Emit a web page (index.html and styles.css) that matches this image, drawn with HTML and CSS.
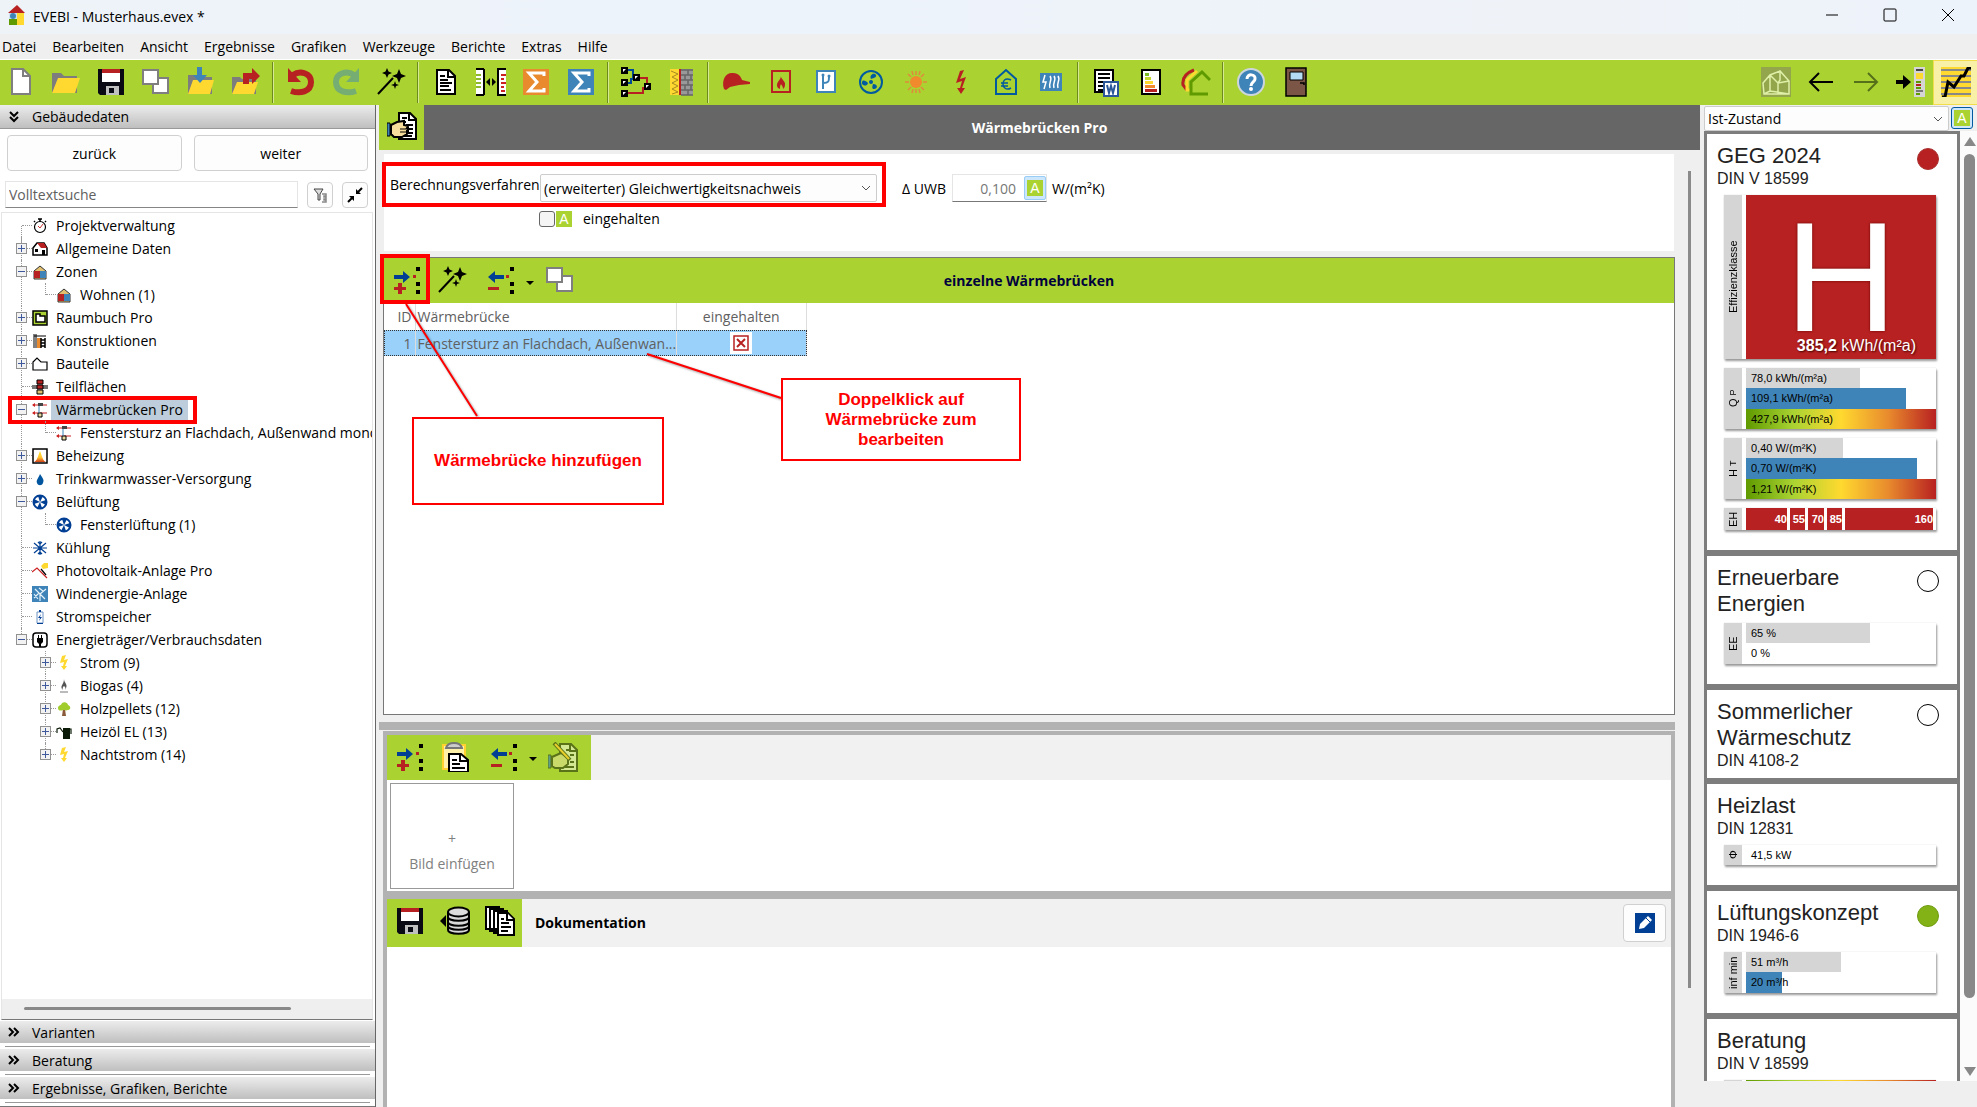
FILE: index.html
```html
<!DOCTYPE html>
<html lang="de">
<head>
  <meta charset="UTF-8" />
  <meta name="viewport" content="width=device-width, initial-scale=1.0" />
  <title>EVEBI - Musterhaus.evex *</title>
  <link rel="stylesheet" href="styles.css">
</head>
<body>
  <svg class="sprite" aria-hidden="true">
    <defs>
      <linearGradient id="fire" x1="0" y1="0" x2="0" y2="1"><stop offset="0" stop-color="#ffe92f"/><stop offset=".6" stop-color="#ffc02f"/><stop offset="1" stop-color="#d0401c"/></linearGradient>
    </defs>
    <!-- toolbar icons, 30 x 30 -->
    <symbol id="new" viewBox="0 0 30 30"><path d="M6 2h11l7 7v18H6z" fill="#fff" stroke="#7f7f7f" stroke-width="2"/><path d="M17 2v7h7" fill="none" stroke="#7f7f7f" stroke-width="2"/></symbol>
    <symbol id="folder" viewBox="0 0 30 30"><path d="M1 6h9l3 3h13v17H1z" fill="#7d7d7d"/><path d="M7 11h22l-5 15H1z" fill="#ffd92f"/></symbol>
    <symbol id="save" viewBox="0 0 30 30"><path d="M2 2h26v26H4l-2-2z" fill="#0a0a14"/><path d="M6 6h18v9H6z" fill="#fff"/><path d="M6 2h18v4H6z" fill="#b82121"/><path d="M10 19h13v9H10z" fill="#bfbfbf"/><path d="M13 21h5v5h-5z" fill="#0a0a14"/></symbol>
    <symbol id="copy" viewBox="0 0 30 30"><g fill="#fff" stroke="#7f7f7f" stroke-width="2"><path d="M12 11h15v15H12z"/><path d="M2 3h15v14H2z"/></g></symbol>
    <symbol id="import" viewBox="0 0 30 30"><path d="M2 8h8l2 2h14v17H2z" fill="#7d7d7d"/><path d="M7 13h21l-4 14H2z" fill="#ffd92f"/><path d="M11 0h5v8h5l-7 8-7-8h4z" fill="#3f84b8"/></symbol>
    <symbol id="export" viewBox="0 0 30 30"><path d="M1 10h8l2 2h14v15H1z" fill="#7d7d7d"/><path d="M6 15h21l-4 12H1z" fill="#ffd92f"/><path d="M12 17V6h9V1l8 8-8 8v-5h-3v5z" fill="#b82121"/></symbol>
    <symbol id="undo" viewBox="0 0 30 30"><path d="M7 8c7-5 18-2 18 7 0 10-11 12-20 9" fill="none" stroke="#b82121" stroke-width="6"/><path d="M2 1v14h13z" fill="#b82121"/></symbol>
    <symbol id="redo" viewBox="0 0 30 30"><path d="M23 8c-7-5-18-2-18 7 0 10 11 12 20 9" fill="none" stroke="#76ad72" stroke-width="6"/><path d="M28 1v14H15z" fill="#76ad72"/></symbol>
    <symbol id="wand" viewBox="0 0 30 30"><path d="M2 27 17 11" stroke="#000" stroke-width="2"/><path d="m11 1 1.500 3.500L16 6l-3.500 1.500L11 11 9.500 7.500 6 6l3.500-1.500zM23 2l2 5 5 2-5 2-2 5-2-5-5-2 5-2zM19 14l1 3 3 1-3 1-1 3-1-3-3-1 3-1z"/></symbol>
    <symbol id="doc" viewBox="0 0 30 30"><path d="M6 3h12l6 6v18H6z" fill="#fff" stroke="#000" stroke-width="2"/><path d="M17 3v7h7M9 9h5M9 13h8M9 16h12M9 19h9M9 23h11" stroke="#000" stroke-width="2" fill="none"/></symbol>
    <symbol id="compare" viewBox="0 0 30 30"><path d="M0 3h8v24H0zM22 3h8v24h-8z" fill="#fff"/><path d="M0 2h8M8 2v26M0 28h8M30 2h-8v26h8" stroke="#000" stroke-width="2" fill="none"/><path d="M0 8h5M0 12h5M0 16h5M0 20h5" stroke="#8cb82b" stroke-width="2"/><path d="M25 8h5M25 12h3M25 16h5M25 20h3M25 24h4" stroke="#c22" stroke-width="2"/><path d="m10 15 4-4v8zM20 15l-4-4v8z"/></symbol>
    <symbol id="sum-o" viewBox="0 0 30 30"><path d="M2 2h26v26H2z" fill="#e88a2d"/><path d="M23 9V6H8l8 9-8 9h15v-3" fill="none" stroke="#fff" stroke-width="3"/></symbol>
    <symbol id="sum-b" viewBox="0 0 30 30"><path d="M2 2h26v26H2z" fill="#3f84b8"/><path d="M23 9V6H8l8 9-8 9h15v-3" fill="none" stroke="#fff" stroke-width="3"/></symbol>
    <symbol id="net" viewBox="0 0 30 30"><path d="M4 3h8v8h4M4 16h6v-4h6" fill="none" stroke="#004a93" stroke-width="2"/><path d="M16 11h10v10M4 26h18v-6" fill="none" stroke="#b82121" stroke-width="2"/><path d="M0 0h7v7H0zM0 12h7v7H0zM0 23h7v7H0zM12 7h7v7h-7zM23 16h7v7h-7z"/><path d="M2 2h3L2 5zM2 14h3l-3 3zM2 25h3l-3 3zM14 9h3l-3 3zM25 18h3l-3 3z" fill="#fff"/></symbol>
    <symbol id="wall" viewBox="0 0 30 30"><path d="M4 2h9v26H4z" fill="#ffd92f"/><path d="M5 4l7 3-6 3 6 3-6 3 6 3-6 3 6 3-6 2" fill="none" stroke="#a78a20"/><path d="M13 2h2v26h-2z" fill="#b82121"/><path d="M15 2h12v26H15z" fill="#999"/><path d="M15 3h12M15 8h12M15 13h12M15 18h12M15 23h12M15 28h12M22 3v5M19 8v5M25 8v5M22 13v5M19 18v5M25 18v5M22 23v5" stroke="#666" stroke-width="1.500"/></symbol>
    <symbol id="cap" viewBox="0 0 30 30"><path d="M3 22c-3-9 2-17 9-16 6 0 8 4 9 7l8 2v2l-11 1-9 2-4 3z" fill="#b82121"/></symbol>
    <symbol id="heat" viewBox="0 0 30 30"><path d="M6 4h18v21H6z" fill="none" stroke="#b82121" stroke-width="2"/><path d="M15 8c-1 4 5 6 4 10 0 2-1 3-2 4 0-3-1-3-2-5-1 2-1 3-1 5-3-1-4-4-2-7 1-2 3-3 3-7z" fill="#b82121"/></symbol>
    <symbol id="pipe" viewBox="0 0 30 30"><path d="M6 4h18v21H6z" fill="#fff" stroke="#3f84b8" stroke-width="2"/><path d="M12 9v13M12 16c6 0 6-2 6-6" fill="none" stroke="#3f84b8" stroke-width="2"/><circle cx="12" cy="8" r="1.500" fill="#3f84b8"/><circle cx="18" cy="9" r="1.500" fill="#3f84b8"/></symbol>
    <symbol id="fan" viewBox="0 0 30 30"><circle cx="15" cy="15" r="11" fill="none" stroke="#005aa0" stroke-width="2"/><g fill="#005aa0"><circle cx="15" cy="15" r="2"/><path d="M15 12c-2-4 3-7 5-4 1 2-2 3-5 4zM12 16c-1 4-7 3-6-1 1-3 4-1 6 1zM17 17c5 0 5 5 1 5-2 0-2-2-1-5z"/></g></symbol>
    <symbol id="sun" viewBox="0 0 30 30"><circle cx="15" cy="15" r="6" fill="#f08a2c"/><path d="M15 4v4M15 22v4M4 15h4M22 15h4M7 7l3 3M20 20l3 3M23 7l-3 3M7 23l3-3M11 4l1 4M19 4l-1 4M11 26l1-4M19 26l-1-4" stroke="#e08a3c" stroke-width="1.500"/></symbol>
    <symbol id="bolt" viewBox="0 0 30 30"><path d="m14 4 4-1-4 9 6-2-4 11h3l-4 6-4-6h3l2-7-6 2z" fill="#b82121"/></symbol>
    <symbol id="euro" viewBox="0 0 30 30"><path d="M5 12 15 3l10 9v15H5z" fill="none" stroke="#005aa0" stroke-width="2"/><path d="M20 13c-6-3-8 1-8 4s3 7 8 4M10 16h7M10 19h7" fill="none" stroke="#005aa0" stroke-width="1.500"/></symbol>
    <symbol id="radiator" viewBox="0 0 30 30"><path d="M4 6h22v18H4z" fill="#3f84b8"/><path d="m9 8-2 7h3l-2 7M14 9c3 4-2 7 0 12M18 9c3 4-2 7 0 12M22 9c3 4-2 7 0 12" fill="none" stroke="#fff" stroke-width="1.500"/></symbol>
    <symbol id="word" viewBox="0 0 30 30"><path d="M4 3h18v22H4z" fill="#fff" stroke="#000" stroke-width="2"/><path d="M7 7h12M7 11h12M7 15h8M7 19h5M7 23h5" stroke="#000" stroke-width="2"/><path d="M13 15h14v14H13z" fill="#fff" stroke="#2b579a" stroke-width="2"/><path d="m16 18 2 8 2-7 2 7 2-8" fill="none" stroke="#2b579a" stroke-width="2"/></symbol>
    <symbol id="label" viewBox="0 0 30 30"><path d="M6 3h18v24H6z" fill="#fff" stroke="#000" stroke-width="2"/><path d="M9 6h4v3H9z" fill="#7db928"/><path d="M9 10h6v3H9z" fill="#c5d82d"/><path d="M9 14h8v3H9z" fill="#ffd92f"/><path d="M9 18h10v3H9z" fill="#f08a2c"/><path d="M9 22h12v3H9z" fill="#b82121"/></symbol>
    <symbol id="houses" viewBox="0 0 30 30"><g fill="none" stroke-width="3"><path d="M13 3C5 6 1 11 2 18l4 5" stroke="#b82121"/><path d="M16 4 6 13v10h5" stroke="#ffd92f"/><path d="m29 13-8-8-11 10v12h17" stroke="#5f9a00"/></g></symbol>
    <symbol id="help" viewBox="0 0 30 30"><circle cx="15" cy="15" r="13" fill="#3f84b8" stroke="#ccd6dc" stroke-width="2"/><path d="M11 12c0-6 9-5 8 0 0 3-4 3-4 7" fill="none" stroke="#fff" stroke-width="3"/><circle cx="15" cy="22" r="2" fill="#fff"/></symbol>
    <symbol id="door" viewBox="0 0 30 30"><path d="M5 1h20v28H5z" fill="#7b5545" stroke="#000" stroke-width="1.500"/><path d="M9 5h13v8H9z" fill="#b5dcf5" stroke="#000"/><path d="M19 16h4v2" fill="none" stroke="#000" stroke-width="1.500"/></symbol>
    <symbol id="view3d" viewBox="0 0 30 30"><path d="M0 0h30v30H0z" fill="#93a64c"/><path d="M2 16 9 8l10-4 9 10v13H3zM9 8l8 8v11M17 16l11-2M19 4v9l-2 3M9 8v16l-6 3M9 24l19 3" fill="none" stroke="#dff0a8" stroke-width="1.500"/></symbol>
    <symbol id="left" viewBox="0 0 30 30"><path d="M27 15H5M13 6l-9 9 9 9" fill="none" stroke="#000" stroke-width="2"/></symbol>
    <symbol id="right" viewBox="0 0 30 30"><path d="M3 15h22M17 6l9 9-9 9" fill="none" stroke="#56701a" stroke-width="2"/></symbol>
    <symbol id="panel" viewBox="0 0 30 30"><path d="M0 13h7V8l8 7-8 7v-5H0z"/><path d="M18 0h11v30H18z" fill="#d5d5d5"/><path d="M20 2h7v2h-7z" fill="#444"/><path d="M20 6h7v6h-7z" fill="#ffd92f"/><path d="M20 14h5v2h-5zM20 20h5v2h-5zM20 26h4v2h-4z" fill="#5f9a00"/><path d="M20 17h5v2h-5z" fill="#b82121"/><path d="M20 23h7v2h-7z" fill="#777"/></symbol>
    <symbol id="chart" viewBox="0 0 30 30"><path d="M0 0h30v30H0z" fill="#ffd92f"/><path d="M0 3h30M0 9h30M0 15h30M0 21h30M0 27h30" stroke="#888" stroke-width="2"/><path d="M1 30h3l3-15 6 5 7-11h3l4-8h3" fill="none" stroke="#000" stroke-width="3"/></symbol>
    <symbol id="handdoc" viewBox="0 0 30 30"><path d="M12 1h11l6 6v20H12z" fill="#fff" stroke="#000" stroke-width="2"/><path d="M22 1v7h7M15 6h5M15 10h4M19 13h7M20 17h6M20 21h6M16 24h9" stroke="#000" stroke-width="2" fill="none"/><path d="M4 13l6-3 7-1v4l4 1-1 2h1v3h-1v3l-5 3H7l-3-3z" fill="#f7dd9b" stroke="#000" stroke-width="2"/><path d="M13 17h7M13 20h7" stroke="#000"/><path d="M0 11h3v13H0z" fill="#3f84b8" stroke="#000"/></symbol>
    <symbol id="add" viewBox="0 0 30 30"><path d="M2 10h9V6l7 6-7 6v-4H2z" fill="#003f94"/><path d="M2 22h4v-4h4v4h4v3h-4v4H6v-4H2z" fill="#b82121"/><path d="M21 10h3v3h-3z" fill="#b82121"/><path d="M24 2h4v4h-4zM24 17h4v4h-4zM24 25h4v4h-4z"/></symbol>
    <symbol id="remove" viewBox="0 0 30 30"><path d="M18 10H9V6l-7 6 7 6v-4h9z" fill="#003f94"/><path d="M2 22h11v3H2z" fill="#b82121"/><path d="M20 10h3v3h-3z" fill="#b82121"/><path d="M24 2h4v4h-4zM24 17h4v4h-4zM24 25h4v4h-4z"/></symbol>
    <symbol id="paste" viewBox="0 0 30 30"><path d="M3 3h22v24H3z" fill="#fff2a8" stroke="#ffd22f" stroke-width="2"/><path d="M6 6c1-4 4-5 8-5s7 1 8 5z" fill="#ccc" stroke="#777" stroke-width="2"/><path d="M9 12h12l7 6v12H9z" fill="#fff" stroke="#000" stroke-width="2"/><path d="M20 12v7h7M12 18h5M12 22h8M12 26h13" stroke="#000" stroke-width="2" fill="none"/></symbol>
    <symbol id="handedit" viewBox="0 0 30 30"><path d="M12 2h11l6 6v21H12z" fill="#d4e894" stroke="#5b7318" stroke-width="2"/><path d="M22 2v7h7" fill="none" stroke="#5b7318" stroke-width="2"/><path d="M18 8h3M22 13h4M22 20h4M17 25h9" stroke="#5b7318" stroke-width="2"/><path d="m4 15 9-4 7 5v6l-5 4H7l-3-2z" fill="#c9d96a" stroke="#5b7318" stroke-width="2"/><path d="M0 13h3v13H0z" fill="#5fa08a" stroke="#5b7318"/><path d="m6 1 16 17" stroke="#5b7318" stroke-width="4"/><path d="m7 2 14 15" stroke="#e9cf2b" stroke-width="2"/></symbol>
    <symbol id="db" viewBox="0 0 30 30"><path d="M0 15l6-6v12z"/><path d="M8 6v18c0 5 21 5 21 0V6" fill="#d8d8d8" stroke="#000" stroke-width="2"/><ellipse cx="18.500" cy="6" rx="10.500" ry="4.500" fill="#ddd" stroke="#000" stroke-width="2"/><path d="M8 11c0 5 21 5 21 0M8 16c0 5 21 5 21 0M8 20c0 5 21 5 21 0" fill="none" stroke="#000" stroke-width="2"/></symbol>
    <symbol id="pages" viewBox="0 0 30 30"><g fill="#fff" stroke="#000" stroke-width="2"><path d="M1 1h13v22H1zM5 3h13v22H5zM9 5h13v22H9z"/><path d="M13 7h10l6 6v16H13z"/><path d="M22 7v7h7M16 13h3M16 17h8M16 21h10M16 25h7"/></g></symbol>
    <symbol id="edit" viewBox="0 0 22 22"><path d="M1 1h20v20H1z" fill="#003f94"/><path d="m5 17 1-5 8-8 4 4-8 8z" fill="#fff"/><path d="m12 6 4 4" stroke="#003f94"/></symbol>
    <!-- tree icons, 16 x 16 -->
    <symbol id="t-clock" viewBox="0 0 16 16"><circle cx="8" cy="9" r="5.500" fill="#fff" stroke="#000" stroke-width="1.200"/><path d="M8 1v3M6 1h4M13 3l1 1M3 3 2 4" stroke="#000" stroke-width="1.500"/><path d="m6 8 2 2 3-4" fill="none" stroke="#c33"/></symbol>
    <symbol id="t-house" viewBox="0 0 16 16"><path d="M1 7 5 2h7l3 5v7H1z" fill="#fff" stroke="#000" stroke-width="1.500"/><path d="M5 2h7l3 5H9z" fill="#b82121"/><path d="M3 8h3v3H3zM10 9h3v5h-3z"/></symbol>
    <symbol id="t-zone" viewBox="0 0 16 16"><path d="M2 7 8 2l6 5v8H2z" fill="#e0bf70" stroke="#333"/><path d="M2 7h6v7H2z" fill="#b82121"/><path d="M8 7h6v7H8z" fill="#3f84b8"/></symbol>
    <symbol id="t-room" viewBox="0 0 16 16"><path d="M1 1h14v14H1z" fill="#a9d232" stroke="#000" stroke-width="1.500"/><path d="M4 4h4v2h5v6H4z" fill="#fff" stroke="#000" stroke-width="1.500"/></symbol>
    <symbol id="t-constr" viewBox="0 0 16 16"><path d="M2 3h12M2 1v14M4 1v14" stroke="#000"/><path d="M5 5h4v10H5z" fill="#e88a2d"/><path d="M9 5v10M13 5v10M9 7h4M9 10h4M9 13h4" stroke="#000" stroke-width="1.500"/></symbol>
    <symbol id="t-part" viewBox="0 0 16 16"><path d="M1 14V6l4-4 4 4h6v8z" fill="#fff" stroke="#000" stroke-width="1.200"/></symbol>
    <symbol id="t-area" viewBox="0 0 16 16"><path d="M5 1h6v4H5z" fill="#b82121" stroke="#000"/><path d="M0 6h16v4H0z" fill="#777"/><path d="M5 6h6v4H5z" fill="#b82121" stroke="#000"/><path d="M5 11h6v4H5z" fill="#e0bf70" stroke="#000"/></symbol>
    <symbol id="t-bridge" viewBox="0 0 16 16"><path d="M1 3h14M1 11h14" stroke="#c22" stroke-width="1.200"/><path d="m0 3 3-2v4zM0 11l3-2v4z" fill="#c22"/><path d="M6 1h5v3H6z" fill="#444"/><path d="M6 11h4v4H6z" fill="#e8d9a0" stroke="#000"/><path d="M7 4v7" stroke="#3f84b8"/></symbol>
    <symbol id="t-fire" viewBox="0 0 16 16"><path d="M1 1h14v14H1z" fill="#fff" stroke="#000" stroke-width="1.500"/><path d="M2 14c3-1 4-6 6-11 2 5 3 10 6 11z" fill="url(#fire)"/></symbol>
    <symbol id="t-drop" viewBox="0 0 16 16"><path d="M8 3c4 6 4 6 3 9-1 3-5 3-6 0-1-3 1-4 3-9z" fill="#00559f"/></symbol>
    <symbol id="t-fan" viewBox="0 0 16 16"><circle cx="8" cy="8" r="6.500" fill="#fff" stroke="#003f94" stroke-width="2"/><path d="M8 8 6 2h5zM8 8l6-2v5zM8 8l2 6H5zM8 8l-6 2V5z" fill="#003f94"/></symbol>
    <symbol id="t-snow" viewBox="0 0 16 16"><path d="M8 1v14M1 8h14M2 3l12 10M14 3 2 13M6 2l2 2 2-2M6 14l2-2 2 2" fill="none" stroke="#003f94" stroke-width="1.200"/></symbol>
    <symbol id="t-pv" viewBox="0 0 16 16"><path d="m0 9 5-4 10 10" fill="none" stroke="#c22" stroke-width="1.200"/><path d="m9 6 5 6" stroke="#000" stroke-width="1.200"/><path d="M12 0h4v5l-5 1-2-3z" fill="#ffd92f"/></symbol>
    <symbol id="t-wind" viewBox="0 0 16 16"><path d="M0 0h16v16H0z" fill="#3f84b8"/><path d="M8 15V8L3 3M8 8l6-5M8 8l5 5M2 8l4 5M7 2l4 3M2 12l5-5" fill="none" stroke="#e6f2fa" stroke-width="1.200"/></symbol>
    <symbol id="t-battery" viewBox="0 0 16 16"><path d="M5 3h6v11H5z" fill="#fff" stroke="#6b94c4"/><path d="M7 1h2v2H7zM5 14h6v1H5zM9 5 6 9h2l-1 3 3-4H8z" fill="#003f94"/></symbol>
    <symbol id="t-plug" viewBox="0 0 16 16"><rect x="1" y="1" width="14" height="14" rx="3" fill="#fff" stroke="#000" stroke-width="1.500"/><path d="M5 6h6v4l-2 2v3H7v-3l-2-2zM6 3h1v3H6zM9 3h1v3H9z"/></symbol>
    <symbol id="t-bolt" viewBox="0 0 16 16"><path d="m6 1 4-1-2 5 4-1-3 7h2l-3 4-3-4h2l1-4-4 1z" fill="#ffd92f"/></symbol>
    <symbol id="t-gas" viewBox="0 0 16 16"><path d="M8 1c0 4 4 5 2 9l-1 2c1-3 0-3-1-4-1 1-2 2-1 4-4-4 1-5 1-11z" fill="#555"/><path d="M4 14h8" stroke="#777"/></symbol>
    <symbol id="t-tree" viewBox="0 0 16 16"><path d="M7 8h2l1 7H6z" fill="#8a5a3a"/><path d="M2 7c0-3 3-2 4-5 3-2 6 0 6 2 3 1 3 5 0 5-2 1-4 0-5 0-2 1-5 1-5-2z" fill="#a0cc2c"/></symbol>
    <symbol id="t-oil" viewBox="0 0 16 16"><path d="M7 4h7v11H7z" fill="#0a1a06"/><path d="M7 8 4 4 1 5v4M13 5h2v5" fill="none" stroke="#0a1a06" stroke-width="1.200"/></symbol>
  </svg>

  <header class="titlebar">
    <svg class="logo" viewBox="0 0 18 22"><path d="M0 8 9 0l8 8z" fill="#b82121"/><path d="M1 8h8v6H1z" fill="#cde3f3"/><circle cx="5" cy="11" r="3" fill="#3f84b8"/><path d="M9 8h7v12H9z" fill="#ffd92f"/><path d="M1 14h8v6H1z" fill="#5f9a00"/></svg>
    <span class="title">EVEBI - Musterhaus.evex *</span>
    <div class="window-controls">
      <button aria-label="Minimieren"><svg viewBox="0 0 14 14"><path d="M1 7h12"/></svg></button>
      <button aria-label="Maximieren"><svg viewBox="0 0 14 14"><rect x="1" y="1" width="12" height="12" rx="1"/></svg></button>
      <button aria-label="Schließen"><svg viewBox="0 0 14 14"><path d="M1 1l12 12M13 1 1 13"/></svg></button>
    </div>
  </header>

  <nav class="menubar">
    <a href="#">Datei</a>
    <a href="#">Bearbeiten</a>
    <a href="#">Ansicht</a>
    <a href="#">Ergebnisse</a>
    <a href="#">Grafiken</a>
    <a href="#">Werkzeuge</a>
    <a href="#">Berichte</a>
    <a href="#">Extras</a>
    <a href="#">Hilfe</a>
  </nav>

  <div class="toolbar">
    <button class="tool" aria-label="Neu"><svg><use href="#new"/></svg></button>
    <button class="tool" aria-label="Öffnen"><svg><use href="#folder"/></svg></button>
    <button class="tool" aria-label="Speichern"><svg><use href="#save"/></svg></button>
    <button class="tool" aria-label="Kopieren"><svg><use href="#copy"/></svg></button>
    <button class="tool" aria-label="Import"><svg><use href="#import"/></svg></button>
    <button class="tool" aria-label="Export"><svg><use href="#export"/></svg></button>
    <span class="sep"></span>
    <button class="tool" aria-label="Rückgängig"><svg><use href="#undo"/></svg></button>
    <button class="tool" aria-label="Wiederholen"><svg><use href="#redo"/></svg></button>
    <button class="tool" aria-label="Assistent"><svg><use href="#wand"/></svg></button>
    <span class="sep"></span>
    <button class="tool" aria-label="Bericht"><svg><use href="#doc"/></svg></button>
    <button class="tool" aria-label="Vergleich"><svg><use href="#compare"/></svg></button>
    <button class="tool" aria-label="Summe Bedarf"><svg><use href="#sum-o"/></svg></button>
    <button class="tool" aria-label="Summe Verbrauch"><svg><use href="#sum-b"/></svg></button>
    <span class="sep"></span>
    <button class="tool" aria-label="Schema"><svg><use href="#net"/></svg></button>
    <button class="tool" aria-label="Bauteil"><svg><use href="#wall"/></svg></button>
    <span class="sep"></span>
    <button class="tool" aria-label="Maßnahmen"><svg><use href="#cap"/></svg></button>
    <button class="tool" aria-label="Heizung"><svg><use href="#heat"/></svg></button>
    <button class="tool" aria-label="Rohrnetz"><svg><use href="#pipe"/></svg></button>
    <button class="tool" aria-label="Lüftung"><svg><use href="#fan"/></svg></button>
    <button class="tool" aria-label="Solar"><svg><use href="#sun"/></svg></button>
    <button class="tool" aria-label="Strom"><svg><use href="#bolt"/></svg></button>
    <button class="tool" aria-label="Kosten"><svg><use href="#euro"/></svg></button>
    <button class="tool" aria-label="Heizlast"><svg><use href="#radiator"/></svg></button>
    <span class="sep"></span>
    <button class="tool" aria-label="Word"><svg><use href="#word"/></svg></button>
    <button class="tool" aria-label="Energieausweis"><svg><use href="#label"/></svg></button>
    <button class="tool" aria-label="Sanierungsfahrplan"><svg><use href="#houses"/></svg></button>
    <span class="sep"></span>
    <button class="tool" aria-label="Hilfe"><svg><use href="#help"/></svg></button>
    <button class="tool" aria-label="Beenden"><svg><use href="#door"/></svg></button>
    <div class="toolbar-right">
      <button class="tool" aria-label="3D"><svg><use href="#view3d"/></svg></button>
      <button class="tool" aria-label="Zurück"><svg><use href="#left"/></svg></button>
      <button class="tool" aria-label="Vor"><svg><use href="#right"/></svg></button>
      <button class="tool" aria-label="Seitenleiste"><svg><use href="#panel"/></svg></button>
      <button class="tool active" aria-label="Diagramm"><svg><use href="#chart"/></svg></button>
    </div>
  </div>

  <div class="workspace">
    <aside class="sidebar">
      <button class="section-head"><svg viewBox="0 0 12 12"><path d="m2 1 4 4 4-4M2 6l4 4 4-4"/></svg>Gebäudedaten</button>
      <div class="nav-buttons">
        <button class="btn">zurück</button>
        <button class="btn">weiter</button>
      </div>
      <div class="search">
        <input type="text" placeholder="Volltextsuche" aria-label="Volltextsuche">
        <button class="btn" aria-label="Filter"><svg viewBox="0 0 16 16"><path d="M2 2h9L8 7v6H6V7z" fill="#ddd" stroke="#444"/><path d="M10 7h4v2h-2v1h2v2h-2v1h2v2h-4" fill="none" stroke="#888" stroke-width="1.500"/></svg></button>
        <button class="btn" aria-label="Zuklappen"><svg viewBox="0 0 16 16"><path d="m15 1-5 5M1 15l5-5" stroke="#000" stroke-width="2"/><path d="M9 2v5h5zM2 9h5v5z"/></svg></button>
      </div>
      <div class="tree">
        <ul>
          <li><div class="node"><svg><use href="#t-clock"/></svg><span>Projektverwaltung</span></div></li>
          <li><div class="node"><button class="exp" aria-label="aufklappen"></button><svg><use href="#t-house"/></svg><span>Allgemeine Daten</span></div></li>
          <li><div class="node"><button class="exp open" aria-label="zuklappen"></button><svg><use href="#t-zone"/></svg><span>Zonen</span></div>
            <ul><li><div class="node"><svg><use href="#t-zone"/></svg><span>Wohnen (1)</span></div></li></ul>
          </li>
          <li><div class="node"><button class="exp" aria-label="aufklappen"></button><svg><use href="#t-room"/></svg><span>Raumbuch Pro</span></div></li>
          <li><div class="node"><button class="exp" aria-label="aufklappen"></button><svg><use href="#t-constr"/></svg><span>Konstruktionen</span></div></li>
          <li><div class="node"><button class="exp" aria-label="aufklappen"></button><svg><use href="#t-part"/></svg><span>Bauteile</span></div></li>
          <li><div class="node"><svg><use href="#t-area"/></svg><span>Teilflächen</span></div></li>
          <li><div class="node marked"><button class="exp open" aria-label="zuklappen"></button><svg><use href="#t-bridge"/></svg><span class="selected">Wärmebrücken Pro</span></div>
            <ul><li><div class="node"><svg><use href="#t-bridge"/></svg><span>Fenstersturz an Flachdach, Außenwand monolithisch</span></div></li></ul>
          </li>
          <li><div class="node"><button class="exp" aria-label="aufklappen"></button><svg><use href="#t-fire"/></svg><span>Beheizung</span></div></li>
          <li><div class="node"><button class="exp" aria-label="aufklappen"></button><svg><use href="#t-drop"/></svg><span>Trinkwarmwasser-Versorgung</span></div></li>
          <li><div class="node"><button class="exp open" aria-label="zuklappen"></button><svg><use href="#t-fan"/></svg><span>Belüftung</span></div>
            <ul><li><div class="node"><svg><use href="#t-fan"/></svg><span>Fensterlüftung (1)</span></div></li></ul>
          </li>
          <li><div class="node"><svg><use href="#t-snow"/></svg><span>Kühlung</span></div></li>
          <li><div class="node"><svg><use href="#t-pv"/></svg><span>Photovoltaik-Anlage Pro</span></div></li>
          <li><div class="node"><svg><use href="#t-wind"/></svg><span>Windenergie-Anlage</span></div></li>
          <li><div class="node"><svg><use href="#t-battery"/></svg><span>Stromspeicher</span></div></li>
          <li><div class="node"><button class="exp open" aria-label="zuklappen"></button><svg><use href="#t-plug"/></svg><span>Energieträger/Verbrauchsdaten</span></div>
            <ul>
              <li><div class="node"><button class="exp" aria-label="aufklappen"></button><svg><use href="#t-bolt"/></svg><span>Strom (9)</span></div></li>
              <li><div class="node"><button class="exp" aria-label="aufklappen"></button><svg><use href="#t-gas"/></svg><span>Biogas (4)</span></div></li>
              <li><div class="node"><button class="exp" aria-label="aufklappen"></button><svg><use href="#t-tree"/></svg><span>Holzpellets (12)</span></div></li>
              <li><div class="node"><button class="exp" aria-label="aufklappen"></button><svg><use href="#t-oil"/></svg><span>Heizöl EL (13)</span></div></li>
              <li><div class="node"><button class="exp" aria-label="aufklappen"></button><svg><use href="#t-bolt"/></svg><span>Nachtstrom (14)</span></div></li>
            </ul>
          </li>
        </ul>
        <div class="hscroll"><i></i></div>
      </div>
      <div class="sections">
        <button class="section-head"><svg viewBox="0 0 12 12"><path d="m1 2 4 4-4 4M6 2l4 4-4 4"/></svg>Varianten</button>
        <button class="section-head"><svg viewBox="0 0 12 12"><path d="m1 2 4 4-4 4M6 2l4 4-4 4"/></svg>Beratung</button>
        <button class="section-head"><svg viewBox="0 0 12 12"><path d="m1 2 4 4-4 4M6 2l4 4-4 4"/></svg>Ergebnisse, Grafiken, Berichte</button>
      </div>
    </aside>

    <main class="main">
      <div class="page-head">
        <button class="tool" aria-label="Seite"><svg><use href="#handdoc"/></svg></button>
        <h1>Wärmebrücken Pro</h1>
      </div>

      <div class="content">
        <form class="form">
          <div class="form-row">
            <div class="field marked">
              <label for="verfahren">Berechnungsverfahren</label>
              <select id="verfahren"><option>(erweiterter) Gleichwertigkeitsnachweis</option></select>
            </div>
            <label for="uwb">Δ UWB</label>
            <div class="number">
              <input type="text" id="uwb" value="0,100">
              <button type="button" aria-label="Automatik"><b class="auto">A</b></button>
            </div>
            <span>W/(m²K)</span>
          </div>
          <div class="check-row">
            <input type="checkbox" id="eingehalten"><b class="auto">A</b>
            <label for="eingehalten">eingehalten</label>
          </div>
        </form>

        <section class="list">
          <div class="list-head">
            <div class="tools">
              <button class="tool marked" aria-label="Hinzufügen"><svg><use href="#add"/></svg></button>
              <button class="tool" aria-label="Assistent"><svg><use href="#wand"/></svg></button>
              <button class="tool split" aria-label="Entfernen"><svg><use href="#remove"/></svg></button>
              <button class="caret" aria-label="Mehr"></button>
              <button class="tool" aria-label="Kopieren"><svg><use href="#copy"/></svg></button>
            </div>
            <h2>einzelne Wärmebrücken</h2>
          </div>
          <table>
            <thead>
              <tr><th class="id">ID</th><th class="name">Wärmebrücke</th><th class="ok">eingehalten</th></tr>
            </thead>
            <tbody>
              <tr><td class="id">1</td><td class="name">Fenstersturz an Flachdach, Außenwan...</td><td class="ok"><svg viewBox="0 0 22 22"><path d="M0 0h22v22H0z" fill="#fff"/><path d="M4 4h14v14H4z" fill="none" stroke="#b82121" stroke-width="1.500"/><path d="m7 7 8 8M15 7l-8 8" stroke="#b82121" stroke-width="2"/></svg></td></tr>
            </tbody>
          </table>
        </section>

        <div class="splitter"></div>

        <section class="details">
          <div class="strip">
            <div class="tools images">
              <button class="tool" aria-label="Hinzufügen"><svg><use href="#add"/></svg></button>
              <button class="tool" aria-label="Einfügen"><svg><use href="#paste"/></svg></button>
              <button class="tool split" aria-label="Entfernen"><svg><use href="#remove"/></svg></button>
              <button class="caret" aria-label="Mehr"></button>
              <button class="tool" aria-label="Bearbeiten"><svg><use href="#handedit"/></svg></button>
            </div>
          </div>
          <div class="images-area">
            <button class="add-image"><span>+</span><span>Bild einfügen</span></button>
          </div>
          <div class="strip docs">
            <div class="tools">
              <button class="tool" aria-label="Speichern"><svg><use href="#save"/></svg></button>
              <button class="tool" aria-label="Datenbank"><svg><use href="#db"/></svg></button>
              <button class="tool" aria-label="Vorlagen"><svg><use href="#pages"/></svg></button>
            </div>
            <h2>Dokumentation</h2>
            <button class="btn edit" aria-label="Bearbeiten"><svg><use href="#edit"/></svg></button>
          </div>
          <div class="doc-text"></div>
        </section>
      </div>
      <div class="vscroll-main"></div>

      <svg class="pointers"><path d="M27 199 98 311M268 249 402 293"/></svg>
      <div class="callout add-hint">Wärmebrücke hinzufügen</div>
      <div class="callout edit-hint">Doppelklick auf Wärmebrücke zum bearbeiten</div>
    </main>

    <aside class="results">
      <div class="variant">
        <select aria-label="Variante"><option>Ist-Zustand</option></select>
        <button aria-label="Automatik"><b class="auto">A</b></button>
      </div>
      <div class="results-body">
        <div class="cards">
          <article class="card">
            <i class="dot red"></i>
            <h3>GEG 2024</h3>
            <p>DIN V 18599</p>
            <div class="gauge">
              <span class="axis">Effizienzklasse</span>
              <div class="letter"><b>H</b><span><strong>385,2</strong> kWh/(m²a)</span></div>
            </div>
            <div class="gauge">
              <span class="axis">Q <small>P</small></span>
              <div class="bars">
                <div class="bar"><i style="width: 60%"></i><span>78,0 kWh/(m²a)</span></div>
                <div class="bar blue"><i style="width: 84%"></i><span>109,1 kWh/(m²a)</span></div>
                <div class="bar scale"><i style="width: 100%"></i><span>427,9 kWh/(m²a)</span></div>
              </div>
            </div>
            <div class="gauge">
              <span class="axis">H <small>T</small></span>
              <div class="bars">
                <div class="bar"><i style="width: 51%"></i><span>0,40 W/(m²K)</span></div>
                <div class="bar blue"><i style="width: 90%"></i><span>0,70 W/(m²K)</span></div>
                <div class="bar scale"><i style="width: 100%"></i><span>1,21 W/(m²K)</span></div>
              </div>
            </div>
            <div class="gauge">
              <span class="axis">EH</span>
              <div class="eh"><b>40</b><b>55</b><b>70</b><b>85</b><b>160</b></div>
            </div>
          </article>
          <article class="card">
            <i class="dot"></i>
            <h3>Erneuerbare Energien</h3>
            <div class="gauge">
              <span class="axis">EE</span>
              <div class="bars">
                <div class="bar"><i style="width: 65%"></i><span>65 %</span></div>
                <div class="bar"><i style="width: 0%"></i><span>0 %</span></div>
              </div>
            </div>
          </article>
          <article class="card short">
            <i class="dot"></i>
            <h3>Sommerlicher Wärmeschutz</h3>
            <p>DIN 4108-2</p>
          </article>
          <article class="card">
            <h3>Heizlast</h3>
            <p>DIN 12831</p>
            <div class="gauge">
              <span class="axis">Φ</span>
              <div class="bars">
                <div class="bar"><i style="width: 0%"></i><span>41,5 kW</span></div>
              </div>
            </div>
          </article>
          <article class="card">
            <i class="dot green"></i>
            <h3>Lüftungskonzept</h3>
            <p>DIN 1946-6</p>
            <div class="gauge">
              <span class="axis">inf min</span>
              <div class="bars">
                <div class="bar"><i style="width: 50%"></i><span>51 m³/h</span></div>
                <div class="bar blue"><i style="width: 19%"></i><span>20 m³/h</span></div>
              </div>
            </div>
          </article>
          <article class="card">
            <h3>Beratung</h3>
            <p>DIN V 18599</p>
            <div class="gauge">
              <span class="axis"></span>
              <div class="bars">
                <div class="bar scale"><i style="width: 100%"></i></div>
              </div>
            </div>
          </article>
        </div>
        <div class="vscroll"><i class="up"></i><i class="thumb"></i><i class="down"></i></div>
      </div>
    </aside>
  </div>
</body>
</html>
```

FILE: styles.css
```css
* {
  box-sizing: border-box;
  margin: 0;
  padding: 0;
}
body {
  display: flex;
  flex-direction: column;
  height: 100vh;
  overflow: hidden;
  background: #efefef;
  font-family: "Open Sans", "Noto Sans", sans-serif;
  font-size: 14px;
  color: #000;
}
button, input, select {
  font: inherit;
  color: inherit;
}
button {
  border: none;
  background: none;
  cursor: pointer;
}
ul {
  list-style: none;
}
.sprite {
  position: absolute;
  width: 0;
  height: 0;
}

/* title + menu */
.titlebar {
  display: flex;
  align-items: center;
  flex: none;
  height: 34px;
  padding: 0 0 2px 8px;
  background: linear-gradient(to right, #eef3f8, #edf3fb 40%, #eff3f8 80%, #edf3fb);
}
.logo {
  width: 18px;
  height: 22px;
}
.title {
  flex: 1;
  padding-left: 7px;
}
.window-controls {
  display: flex;
}
.window-controls button {
  width: 58px;
  height: 30px;
}
.window-controls svg {
  width: 14px;
  height: 14px;
  fill: none;
  stroke: #000;
}
.menubar {
  display: flex;
  flex: none;
  gap: 16px;
  height: 26px;
  padding-left: 2px;
  line-height: 26px;
  border-bottom: 1px solid #fff;
}
.menubar a {
  color: #000;
  text-decoration: none;
}

/* toolbars */
.toolbar {
  display: flex;
  flex: none;
  height: 45px;
  margin: 0 -1px 0 -2px;
  background: #aad332;
}
.toolbar-right {
  display: flex;
  margin-left: auto;
}
.tool {
  display: flex;
  flex: none;
  align-items: center;
  justify-content: center;
  width: 45px;
  height: 45px;
  padding-bottom: 1px;
}
.tool svg {
  width: 30px;
  height: 30px;
}
.tool.active {
  background: #f9f0a8;
  border: 1px solid #f2de4a;
}
.sep {
  flex: none;
  width: 2px;
  margin: 2px 4px;
  background: linear-gradient(to right, #6d8b1c 50%, #d5ea92 50%);
}
.caret {
  width: 14px;
}
.caret::before {
  content: "";
  display: block;
  margin: 4px auto 0;
  width: 0;
  border: 4px solid transparent;
  border-top-color: #000;
  border-bottom: none;
}
.split {
  margin-left: 4px;
}
.auto {
  display: block;
  width: 16px;
  height: 16px;
  background: #aad332;
  color: #fff;
  font: 14px/16px "Liberation Sans", sans-serif;
  text-align: center;
}

.workspace {
  display: flex;
  flex: 1;
  min-height: 0;
}

/* red highlight frames */
.marked {
  position: relative;
}
.marked::after {
  content: "";
  position: absolute;
  border: 4px solid #f00;
  pointer-events: none;
}

/* sidebar */
.sidebar {
  display: flex;
  flex-direction: column;
  flex: none;
  width: 376px;
  background: #fff;
  border-right: 1px solid #666;
}
.section-head {
  display: flex;
  flex: none;
  align-items: center;
  width: 100%;
  height: 22px;
  padding-left: 8px;
  background: linear-gradient(#ececec, #bfbfbf);
}
.section-head svg {
  width: 12px;
  height: 12px;
  margin-right: 12px;
  fill: none;
  stroke: #000;
  stroke-width: 2;
}
.sidebar > .section-head {
  height: 24px;
  border-bottom: 1px solid #999;
}
.btn {
  display: flex;
  align-items: center;
  justify-content: center;
  background: #fdfdfd;
  border: 1px solid #d0d0d0;
  border-radius: 4px;
}
.nav-buttons {
  display: flex;
  gap: 12px;
  padding: 6px 7px 10px;
}
.nav-buttons .btn {
  flex: 1;
  height: 36px;
}
.search {
  display: flex;
  align-items: center;
  gap: 9px;
  padding: 0 7px 4px 5px;
}
.search input {
  flex: 1;
  min-width: 0;
  height: 27px;
  padding-left: 3px;
  border: 1px solid #e5e5e5;
  border-bottom-color: #858585;
}
.search input::placeholder {
  color: #606060;
}
.search .btn {
  width: 26px;
  height: 26px;
}
.search svg {
  width: 16px;
  height: 16px;
}
.tree {
  display: flex;
  flex-direction: column;
  flex: 1;
  min-height: 0;
  margin: 0 2px 1px 1px;
  padding-top: 1px;
  border: 1px solid #e5e5e5;
  border-bottom-color: #777;
}
.tree > ul {
  flex: 1;
  overflow: hidden;
  padding-left: 14px;
}
.tree li {
  position: relative;
}
.tree li ul {
  padding-left: 24px;
}
.tree li::before {
  content: "";
  position: absolute;
  top: 0;
  left: 5px;
  height: 100%;
  border-left: 1px dotted #999;
}
.tree > ul > li:first-child::before {
  top: 12px;
}
.tree li:last-child::before {
  height: 12px;
}
.node {
  display: flex;
  align-items: center;
  height: 23px;
  padding-left: 16px;
  white-space: nowrap;
}
.node::before {
  content: "";
  position: absolute;
  left: 6px;
  top: 11px;
  width: 10px;
  border-top: 1px dotted #999;
}
.node svg {
  flex: none;
  width: 16px;
  height: 16px;
  margin-right: 3px;
}
.node span {
  padding: 0 5px;
  line-height: 20px;
}
.node .selected {
  background: #becddb;
}
.node.marked {
  width: 180px;
}
.node.marked::before {
  display: none;
}
.node.marked::after {
  inset: -2px -1px -3px -8px;
}
.exp {
  position: absolute;
  left: 0;
  top: 6px;
  z-index: 1;
  width: 11px;
  height: 11px;
  border: 1px solid #919191;
  background: linear-gradient(#3f5a9c, #3f5a9c) center / 7px 1px no-repeat, linear-gradient(#3f5a9c, #3f5a9c) center / 1px 7px no-repeat, #f2f2f2;
}
.exp.open {
  background: linear-gradient(#3f5a9c, #3f5a9c) center / 7px 1px no-repeat, #f2f2f2;
}
.hscroll {
  flex: none;
  height: 20px;
  padding: 8px 81px 0 22px;
  background: #efefef;
}
.hscroll i {
  display: block;
  height: 3px;
  border-radius: 2px;
  background: #888;
}
.sections {
  flex: none;
  padding-bottom: 1px;
  border-bottom: 1px solid #777;
}
.sections .section-head {
  margin-bottom: 6px;
  position: relative;
}
.sections .section-head::after {
  content: "";
  position: absolute;
  left: 5px;
  right: 5px;
  bottom: -4px;
  height: 1px;
  background: #999;
}

/* main */
.main {
  position: relative;
  display: grid;
  grid-template-columns: minmax(0, 1fr) auto;
  grid-template-rows: 45px minmax(0, 1fr);
  flex: 1;
  min-width: 0;
  margin-left: 3px;
}
.page-head, .list-head {
  display: grid;
  grid-template-columns: 1fr auto 1fr;
  align-items: center;
  height: 45px;
}
.page-head {
  grid-column: 1 / -1;
  background: #666;
  color: #fff;
}
.page-head .tool {
  background: #aad332;
}
h1, h2 {
  font-size: 14px;
  font-weight: bold;
}
.content {
  display: flex;
  flex-direction: column;
  padding-top: 4px;
}
.form {
  height: 97px;
  flex: none;
  margin: 0 1px 6px 5px;
  padding: 20px 6px 0;
  background: #fff;
}
.form-row {
  display: flex;
  align-items: center;
}
.field {
  display: flex;
  margin-right: 25px;
}
.field label {
  width: 150px;
  line-height: 22px;
  white-space: nowrap;
}
.field.marked::after {
  inset: -12px -9px -5px -8px;
}
select {
  appearance: none;
  border: 1px solid #ccc;
  border-radius: 2px;
  background: #fdfdfd url("data:image/svg+xml,%3Csvg xmlns='http://www.w3.org/2000/svg' width='10' height='6'%3E%3Cpath d='M1 1l4 4 4-4' fill='none' stroke='%23555'/%3E%3C/svg%3E") right 5px center no-repeat;
}
.field select {
  width: 337px;
  height: 28px;
  padding-left: 3px;
}
.number {
  display: flex;
  align-items: center;
  width: 95px;
  height: 28px;
  margin: 0 5px 0 6px;
  border: 1px solid #e5e5e5;
  border-bottom-color: #777;
}
.number input {
  flex: 1;
  min-width: 0;
  border: none;
  outline: none;
  color: #777;
  text-align: right;
}
.number button {
  height: 24px;
  margin-left: 8px;
  padding: 0 2px;
  background: #cce6fb;
  border: 1px solid #99cdf5;
  border-radius: 2px;
}
.check-row {
  display: flex;
  align-items: center;
  gap: 1px;
  padding: 7px 0 0 149px;
}
.check-row input {
  appearance: none;
  width: 16px;
  height: 16px;
  border: 1px solid #666;
  border-radius: 3px;
  background: #f5f5f5;
}
.check-row label {
  padding-left: 10px;
}
.list {
  flex: 459 1 0;
  min-height: 0;
  margin-left: 4px;
  border: 1px solid #777;
  background: #fff;
}
.list-head {
  background: #aad332;
}
.list-head h2 {
  color: #00003c;
}
.tools {
  display: flex;
  background: #aad332;
}
.tool.marked::after {
  inset: -4px -1px -1px -4px;
}
table {
  table-layout: fixed;
  width: 423px;
  border-collapse: collapse;
  color: #606060;
}
th, td {
  overflow: hidden;
  white-space: nowrap;
  font-weight: normal;
  border-right: 1px solid #ddd;
}
th {
  height: 27px;
}
td {
  height: 26px;
}
tbody tr {
  background: #99d1fb;
  outline: 1px dotted #333;
  outline-offset: -1px;
}
.id {
  width: 31px;
  padding-right: 3px;
  text-align: right;
}
.name {
  width: 261px;
  padding-left: 2px;
  text-align: left;
}
.ok {
  text-align: center;
}
td svg {
  display: block;
  width: 22px;
  height: 22px;
  margin: auto;
}
.splitter {
  flex: none;
  height: 8px;
  margin: 7px 0 1px;
  background: #b2b2b2;
}
.details {
  display: flex;
  flex-direction: column;
  flex: 375 1 0;
  min-height: 0;
  margin-left: 4px;
  border: 4px solid #b2b2b2;
  border-bottom: none;
}
.strip {
  display: flex;
  flex: none;
  align-items: center;
  background: #f1f1f1;
}
.images {
  padding-right: 6px;
}
.images-area {
  flex: none;
  height: 111px;
  padding: 3px;
  background: #fff;
}
.add-image {
  display: flex;
  flex-direction: column;
  justify-content: flex-end;
  gap: 6px;
  width: 124px;
  height: 106px;
  padding-bottom: 15px;
  border: 1px solid #999;
  color: #808080;
}
.docs {
  border-top: 8px solid #b2b2b2;
}
.docs .tools {
  padding-bottom: 3px;
}
.docs h2 {
  flex: 1;
  padding-left: 13px;
}
.edit {
  width: 43px;
  height: 38px;
  margin-right: 5px;
}
.edit svg {
  width: 22px;
  height: 22px;
}
.doc-text {
  flex: 1;
  background: #fff;
}
.vscroll-main {
  width: 3px;
  height: calc(100% - 140px);
  margin: 21px 9px 0 13px;
  background: #8a8a8a;
}
.pointers {
  position: absolute;
  left: 0;
  top: 0;
  width: 100%;
  height: 400px;
  pointer-events: none;
  fill: none;
  stroke: #f00;
  stroke-width: 2;
  filter: drop-shadow(1px 1px 1px rgba(0, 0, 0, 0.4));
}
.callout {
  position: absolute;
  display: flex;
  align-items: center;
  justify-content: center;
  background: #fff;
  border: 2px solid #f00;
  color: #f00;
  font: bold 17px/20px "Liberation Sans", sans-serif;
  text-align: center;
}
.add-hint {
  left: 33px;
  top: 312px;
  width: 252px;
  height: 88px;
}
.edit-hint {
  left: 402px;
  top: 273px;
  width: 240px;
  height: 83px;
  padding: 0 30px;
}

/* results */
.results {
  display: flex;
  flex-direction: column;
  flex: none;
  width: 273px;
  margin-left: 4px;
  padding-bottom: 26px;
}
.variant {
  display: flex;
  flex: none;
  align-items: flex-end;
  height: 26px;
}
.variant select {
  width: 245px;
  height: 25px;
  padding-left: 3px;
}
.variant button {
  margin: 0 0 2px 2px;
  padding: 2px;
  background: #cce6fb;
  border: 1px solid #005aa0;
  border-radius: 3px;
}
.results-body {
  display: flex;
  flex: 1;
  min-height: 0;
}
.cards {
  flex: 1;
  overflow: hidden;
  border: 3px solid #7d7d7d;
  border-bottom: none;
  background: #7d7d7d;
  font-family: "Liberation Sans", sans-serif;
  color: #222;
}
.card {
  display: flow-root;
  margin-bottom: 6px;
  padding: 9px 21px 20px 10px;
  background: #fff;
}
.card.short {
  padding-bottom: 7px;
}
.card h3 {
  font-size: 22px;
  font-weight: normal;
  line-height: 26px;
}
.card p {
  font-size: 16px;
  line-height: 20px;
}
.dot {
  float: right;
  width: 22px;
  height: 22px;
  margin: 5px -3px 0 20px;
  border: 1px solid #000;
  border-radius: 50%;
}
.dot.red {
  background: #b82121;
  border-color: #a33;
}
.dot.green {
  background: #82b216;
  border-color: #6f9c10;
}
.gauge {
  display: flex;
  gap: 4px;
  clear: both;
  margin: 6px 0 0 7px;
  font-size: 11px;
  color: #000;
  box-shadow: 1px 2px 2px #999, 0 0 1px #ccc;
}
.gauge + .gauge {
  margin-top: 9px;
}
.axis {
  width: 18px;
  background: #d5d5d5;
  line-height: 18px;
  text-align: center;
  writing-mode: vertical-rl;
  transform: rotate(180deg);
}
.axis small {
  font-size: 9px;
}
.bars, .letter, .eh {
  flex: 1;
}
.letter {
  position: relative;
  height: 164px;
  background: #b82121;
  color: #fff;
  text-align: center;
}
.letter b {
  display: block;
  font-size: 156px;
  font-weight: normal;
  line-height: 164px;
  text-shadow: 0 0 3px #600;
}
.letter span {
  position: absolute;
  right: 20px;
  bottom: 4px;
  font-size: 16px;
  text-shadow: 1px 1px 2px #400;
}
.bar {
  position: relative;
  height: 20px;
  line-height: 20px;
}
.bar + .bar {
  height: 21px;
}
.bar + .bar.scale {
  height: 20px;
}
.bar i {
  position: absolute;
  inset: 0 auto 0 0;
  background: #d5d5d5;
}
.bar.blue i {
  background: #3f84b8;
}
.bar.scale i {
  background: linear-gradient(to right, #5f9a00, #aad332 25%, #ffd92f 50%, #e88a2d 75%, #b82121);
}
.bar span {
  position: relative;
  padding-left: 5px;
}
.eh {
  display: grid;
  grid-template-columns: 41fr 15fr 16fr 15fr 88fr;
  gap: 3px;
  padding-right: 3px;
}
.eh b {
  height: 22px;
  background: #b82121;
  color: #fff;
  line-height: 22px;
  text-align: right;
}
.vscroll {
  display: flex;
  flex-direction: column;
  align-items: center;
  width: 17px;
  padding: 6px 0 5px 2px;
  background: #fbfbfb;
}
.vscroll .up, .vscroll .down {
  border: 6px solid transparent;
  border-bottom: 9px solid #888;
  border-top: none;
}
.vscroll .down {
  border-top: 9px solid #888;
  border-bottom: none;
}
.vscroll .thumb {
  flex: 1;
  width: 11px;
  margin: 8px 0 69px;
  border-radius: 6px;
  background: #888;
}
```
